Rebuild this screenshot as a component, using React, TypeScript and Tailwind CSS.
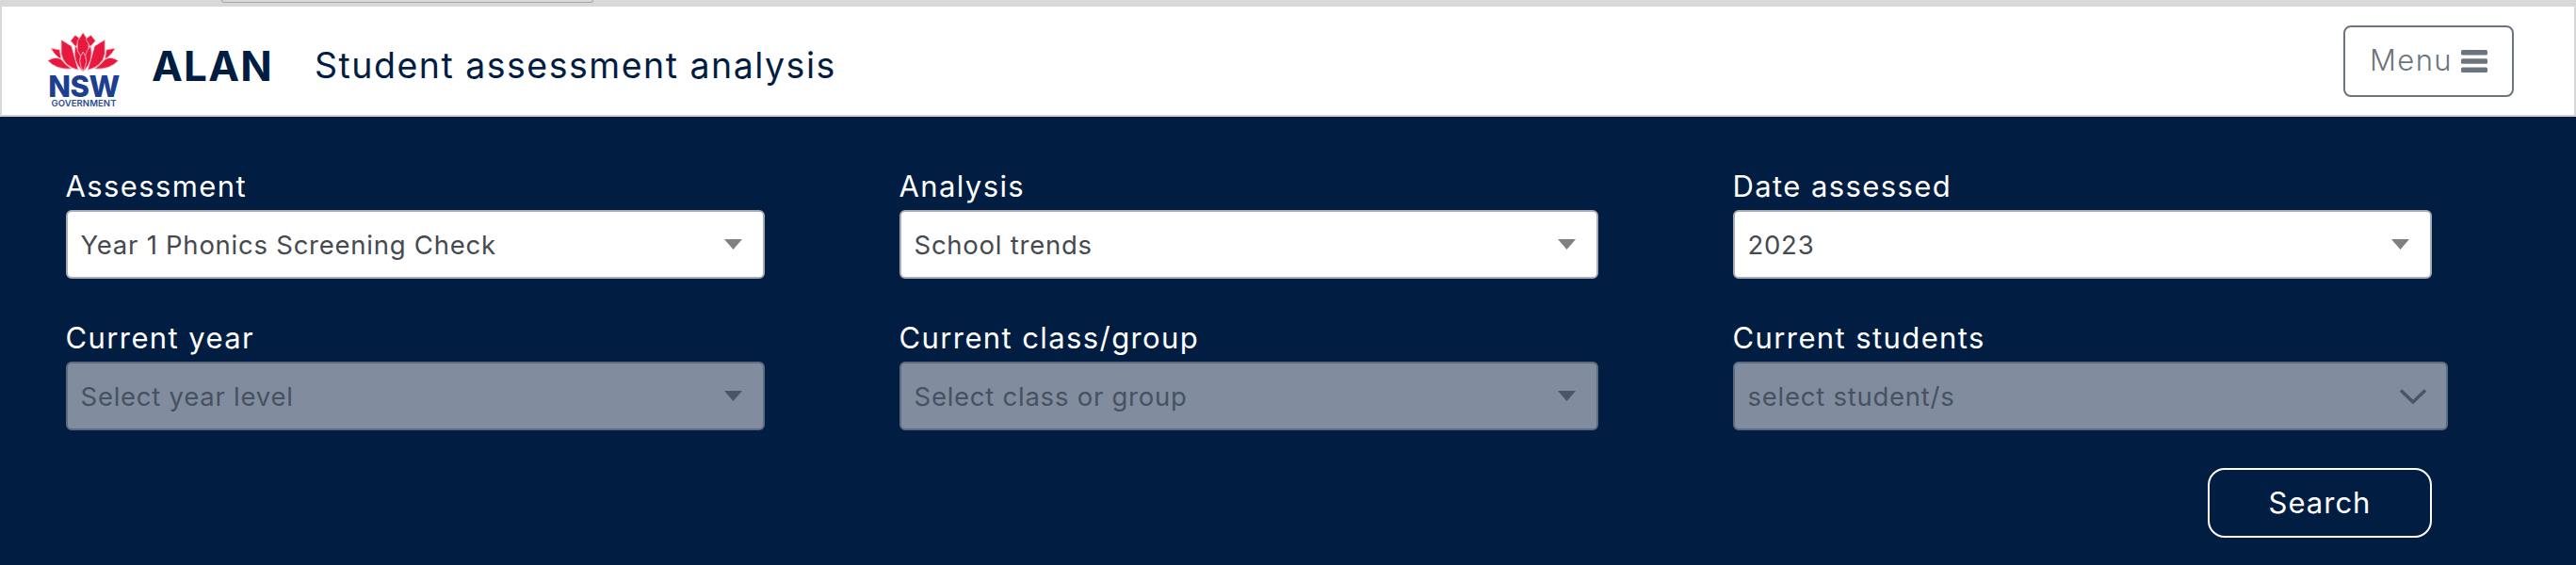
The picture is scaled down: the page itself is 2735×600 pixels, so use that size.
const petals = [
  "M175 42 L193 70 L193 100 L175 130 L157 100 L157 70Z",
  "M150 50 L166 62 L152 88 L135 68Z",
  "M105 65 L138 85 Q146 115 160 162 Q112 150 105 110Z",
  "M150 84 Q176 110 174 166 Q140 135 150 84Z",
  "M72 92 L100 97 L105 127 Q85 117 72 92Z",
  "M62 132 Q85 116 105 128 Q118 146 138 158 Q90 162 62 132Z",
];

function Logo() {
  return (
    <div className="mt-[18px] flex w-[78px] flex-col items-center">
      <svg viewBox="60 40 235 130" className="h-[43px] w-[78px]">
        {[0, 1].map((m) => (
          <g key={m} transform={m ? "translate(350 0) scale(-1 1)" : undefined}>
            {petals.map((d) => (
              <path key={d} d={d} fill="#e8193f" stroke="#f7c4ce" strokeWidth="2.5" strokeLinejoin="round" />
            ))}
          </g>
        ))}
        <path d="M175 104 Q196 130 175 166 Q154 130 175 104Z" fill="#e8193f" stroke="#f7c4ce" strokeWidth="2.5" />
      </svg>
      <span className="mt-[3px] h-[24px] font-[Inter,sans-serif] text-[31px] leading-[24px] font-extrabold tracking-[-0.5px] text-[#1d3f8f]">
        NSW
      </span>
      <span className="mt-[1px] h-[9px] whitespace-nowrap font-[Inter,sans-serif] text-[9.5px] leading-[9px] font-semibold tracking-[0.1px] text-[#2b4c94]">
        GOVERNMENT
      </span>
    </div>
  );
}

function Arrow({ disabled }: { disabled?: boolean }) {
  return (
    <svg viewBox="0 0 19 11" className="h-[11px] w-[19px]">
      <path d="M0 0H19L9.5 11Z" fill={disabled ? "#4a5568" : "#808080"} />
    </svg>
  );
}

function Field({
  label,
  value,
  disabled,
  wide,
  chevron,
}: {
  label: string;
  value: string;
  disabled?: boolean;
  wide?: boolean;
  chevron?: boolean;
}) {
  return (
    <div className={wide ? "w-[759px]" : "w-[742px]"}>
      <div className="h-[48px] text-[31px] leading-[46px] tracking-[1.4px] text-white">{label}</div>
      <div
        className={
          disabled
            ? "flex h-[73px] items-center justify-between rounded-[6px] border-2 border-[#5d6b80] bg-[#818d9e] pl-[14px] pr-[22px]"
            : "flex h-[73px] items-center justify-between rounded-[6px] border-2 border-[#a9adb3] bg-white pl-[14px] pr-[22px]"
        }
      >
        <span
          className={
            disabled
              ? "pt-[2px] text-[27.5px] tracking-[0.75px] text-[#465162]"
              : "pt-[2px] text-[27.5px] tracking-[0.75px] text-[#454a50]"
          }
        >
          {value}
        </span>
        {chevron ? (
          <svg viewBox="0 0 30 16" className="-mr-[2px] h-[16px] w-[30px]">
            <path d="M2 1.5L15 14L28 1.5" fill="none" stroke="#4a5568" strokeWidth="3.5" />
          </svg>
        ) : (
          <Arrow disabled={disabled} />
        )}
      </div>
    </div>
  );
}

export default function App() {
  return (
    <div className="flex h-[600px] w-[2735px] flex-col overflow-hidden bg-[#011e42] font-[Inter,sans-serif]">
      <div className="h-[7px] bg-[#d8d8d8] pl-[235px]">
        <div className="h-[3px] w-[395px] rounded-b-[4px] border-x border-b border-[#a8a8a8]" />
      </div>
      <header className="flex h-[117px] items-center border-x-2 border-b-2 border-x-[#d8d8d8] border-b-[#d0d0d0] bg-white pl-[48px]">
        <Logo />
        <span className="ml-[33px] mt-[11px] text-[44px] font-bold tracking-[1.2px] text-[#011e42]">ALAN</span>
        <span className="ml-[44px] mt-[11px] text-[37.5px] tracking-[1.5px] text-[#011e42]">
          Student assessment analysis
        </span>
        <button className="ml-auto mr-[64px] flex h-[76px] w-[181px] items-center justify-center gap-[9px] rounded-[8px] border-2 border-[#6c757d] text-[31px] font-light tracking-[1.4px] text-[#6c757d]">
          Menu
          <svg viewBox="0 0 28 24" className="h-[24px] w-[28px]">
            <rect x="0" y="0" width="28" height="5.5" rx="1.5" fill="#6c757d" />
            <rect x="0" y="9.25" width="28" height="5.5" rx="1.5" fill="#6c757d" />
            <rect x="0" y="18.5" width="28" height="5.5" rx="1.5" fill="#6c757d" />
          </svg>
        </button>
      </header>
      <main className="flex flex-col pl-[69.5px] pt-[51px]">
        <div className="grid grid-cols-[repeat(3,885px)] gap-y-[40px]">
          <Field label="Assessment" value="Year 1 Phonics Screening Check" />
          <Field label="Analysis" value="School trends" />
          <Field label="Date assessed" value="2023" />
          <Field label="Current year" value="Select year level" disabled />
          <Field label="Current class/group" value="Select class or group" disabled />
          <Field label="Current students" value="select student/s" disabled wide chevron />
        </div>
        <div className="mt-[40px] flex justify-start pl-[2274.5px]">
          <button className="flex h-[74px] w-[238px] items-center justify-center rounded-[18px] border-2 border-white text-[31px] tracking-[1px] text-white">
            Search
          </button>
        </div>
      </main>
    </div>
  );
}
